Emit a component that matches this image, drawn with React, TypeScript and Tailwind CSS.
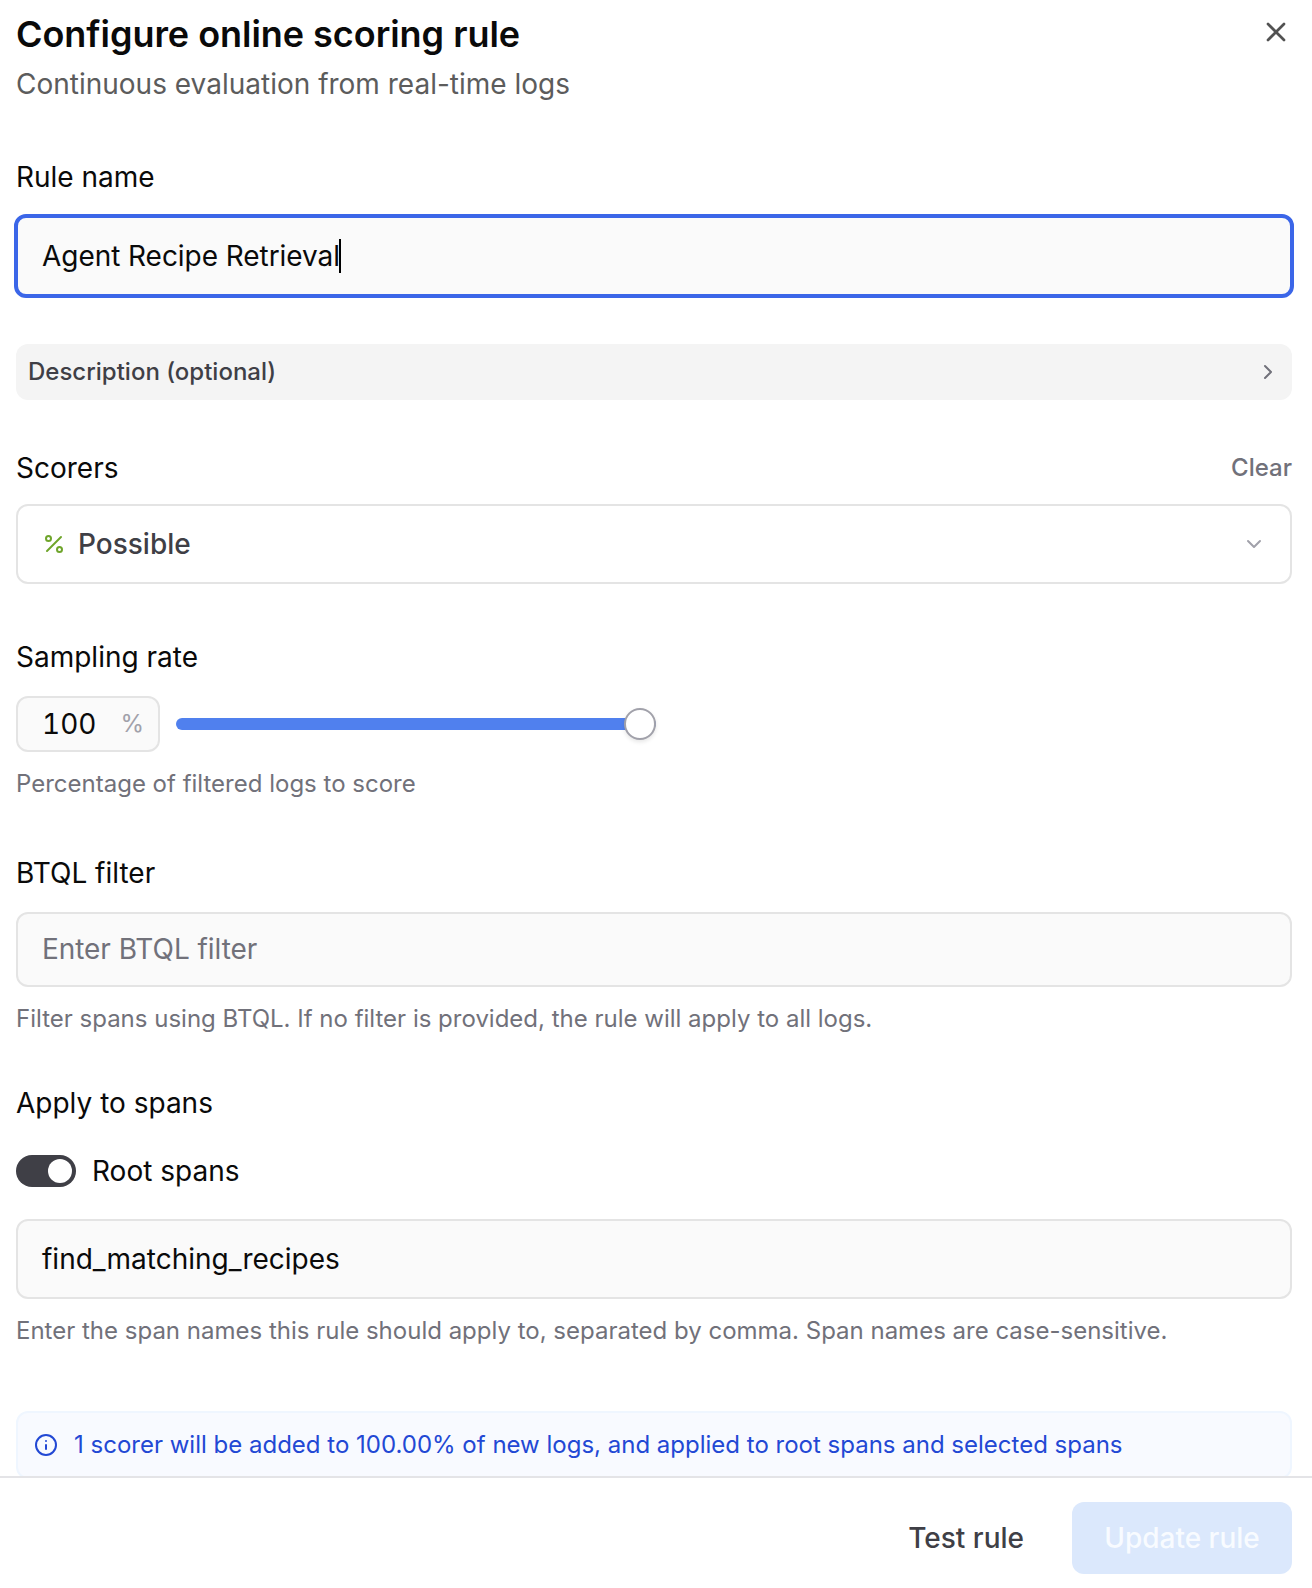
import { useState } from "react";
import { ChevronDown, ChevronRight, Info, Percent, X } from "lucide-react";

const field =
  "flex w-full items-center rounded-xl border-2 border-[#e4e4e4] bg-[#fafafa] px-6 text-[28px] leading-10";
const label = "h-10 text-[28px] leading-10 whitespace-nowrap";
const hint = "h-8 text-[24px] leading-8 whitespace-nowrap text-[#71717a]";

export default function App() {
  const [rootSpans, setRootSpans] = useState(true);
  const rate = 100;

  return (
    <div className="flex h-[1588px] w-[1312px] flex-col overflow-hidden bg-white font-['Inter',sans-serif] text-[#0a0a0a]">
      <main className="flex min-h-0 flex-1 flex-col overflow-hidden pr-5 pl-4">
        <header className="flex shrink-0 items-start justify-between pt-2.5">
          <div>
            <h1 className="text-[36px] leading-[48px] font-semibold tracking-[-0.001em] whitespace-nowrap">
              Configure online scoring rule
            </h1>
            <p className="mt-1.5 text-[28px] leading-10 whitespace-nowrap text-[#5c5c5c]">
              Continuous evaluation from real-time logs
            </p>
          </div>
          <button aria-label="Close" className="mt-1.5 text-[#525252]">
            <X size={32} strokeWidth={2} />
          </button>
        </header>

        <section className="mt-[53px] shrink-0">
          <div className={label}>Rule name</div>
          <div className="mt-[19px] flex h-20 items-center rounded-[10px] bg-[#fafafa] px-[26px] text-[28px] leading-10 outline-4 -outline-offset-2 outline-[#3b66e8]">
            <span className="tracking-[-0.002em]">Agent Recipe Retrieval</span>
            <span className="-ml-px h-[34px] w-0.5 bg-black" />
          </div>
        </section>

        <button className="mt-12 flex h-14 shrink-0 items-center justify-between rounded-xl bg-[#f4f4f4] px-3 text-[24px] font-medium text-[#3f3f46]">
          <span>Description (optional)</span>
          <ChevronRight size={24} className="text-[#71717a]" />
        </button>

        <section className="mt-12 shrink-0">
          <div className="flex items-center justify-between">
            <div className={label}>Scorers</div>
            <button className="text-[24px] leading-10 font-medium text-[#71717a]">Clear</button>
          </div>
          <div className="mt-4 flex h-20 items-center rounded-xl border-2 border-[#e4e4e4] px-6 text-[28px] font-medium text-[#3f3f46]">
            <Percent size={24} className="mr-3 text-[#6fa52b]" />
            <span className="flex-1">Possible</span>
            <ChevronDown size={24} className="text-[#a1a1aa]" />
          </div>
        </section>

        <section className="mt-[53px] shrink-0">
          <div className={label}>Sampling rate</div>
          <div className="mt-[19px] flex h-14 items-center gap-4">
            <div className="flex h-14 w-36 items-center justify-between rounded-xl border-2 border-[#e4e4e4] bg-[#fafafa] pr-3.5 pl-6 text-[28px]">
              <span className="tabular-nums">{rate}</span>
              <span className="text-[24px] text-[#a1a1aa]">%</span>
            </div>
            <div className="relative flex h-8 w-[480px] items-center">
              <div className="h-3 w-full overflow-hidden rounded-full bg-[#e4e4e7]">
                <div className="h-full bg-[#5080ee]" style={{ width: `${rate}%` }} />
              </div>
              <div className="absolute right-0 size-8 rounded-full border-2 border-[#a1a1aa] bg-white shadow-[0_2px_4px_rgba(0,0,0,0.1)]" />
            </div>
          </div>
          <p className={`${hint} mt-4`}>Percentage of filtered logs to score</p>
        </section>

        <section className="mt-[53px] shrink-0">
          <div className={label}>BTQL filter</div>
          <div className={`${field} mt-[19px] h-[75px] pb-px tracking-[-0.002em] text-[#71717a]`}>Enter BTQL filter</div>
          <p className={`${hint} mt-4`}>
            Filter spans using BTQL. If no filter is provided, the rule will apply to all logs.
          </p>
        </section>

        <section className="mt-12 shrink-0">
          <div className={label}>Apply to spans</div>
          <div className="mt-7 flex h-10 items-center gap-4">
            <button
              role="switch"
              aria-checked={rootSpans}
              onClick={() => setRootSpans(!rootSpans)}
              className={`flex h-8 w-[60px] items-center rounded-full p-1 ${rootSpans ? "justify-end bg-[#3f3f46]" : "justify-start bg-[#d4d4d8]"}`}
            >
              <span className="size-6 rounded-full bg-white" />
            </button>
            <span className="text-[28px] leading-10">Root spans</span>
          </div>
          <div className={`${field} mt-7 h-20`}>find_matching_recipes</div>
          <p className={`${hint} mt-4`}>
            Enter the span names this rule should apply to, separated by comma. Span names are case-sensitive.
          </p>
        </section>

        <div className="mt-16 flex h-[68px] shrink-0 items-center gap-4 rounded-xl border-2 border-[#eff6ff] bg-[#f8faff] px-4 text-[24px] whitespace-nowrap text-[#2248d4]">
          <Info size={24} className="shrink-0" />
          <span>1 scorer will be added to 100.00% of new logs, and applied to root spans and selected spans</span>
        </div>
      </main>

      <footer className="flex h-28 shrink-0 items-start justify-end gap-4 border-t-2 border-[#e4e4e7] pt-6 pr-5 pl-4 text-[28px] font-medium">
        <button className="h-[72px] px-8 text-[#3f3f46]">Test rule</button>
        <button className="h-[72px] w-[220px] rounded-xl bg-[#dbe8fc] text-[#f8fbff]">Update rule</button>
      </footer>
    </div>
  );
}
